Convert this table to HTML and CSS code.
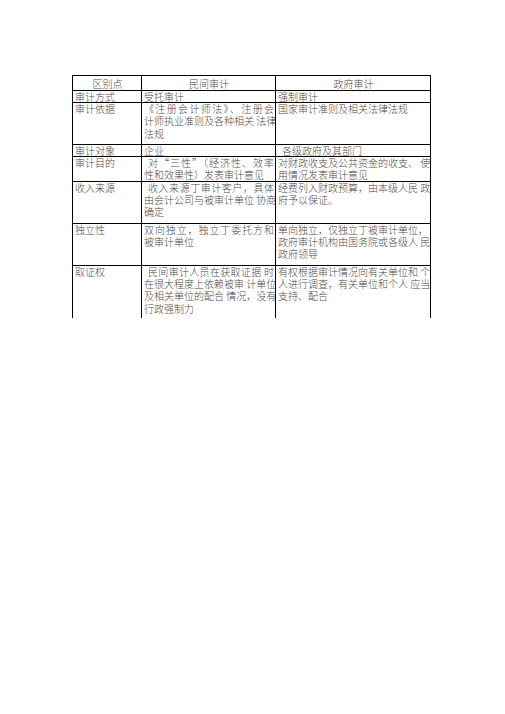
FILE: index.html
```html
<!DOCTYPE html>
<html lang="zh">
<head>
<meta charset="utf-8">
<title>民间审计与政府审计</title>
<link rel="stylesheet" href="styles.css">
</head>
<body>
<div class="page">
<table class="cmp">
<colgroup><col class="c1"><col class="c2"><col class="c3"></colgroup>
<tr class="r-head">
<th>区别点</th><th>民间审计</th><th>政府审计</th>
</tr>
<tr class="r-fs">
<td>审计方式</td><td>受托审计</td><td>强制审计</td>
</tr>
<tr class="r-yj">
<td>审计依据</td>
<td><span class="j">《注册会计师法》、注册会</span><span class="j">计师执业准则及各种相关 法律</span><span class="l">法规</span></td>
<td><span class="l">国家审计准则及相关法律法规</span></td>
</tr>
<tr class="r-dx">
<td>审计对象</td><td>企业</td><td><span class="l ind">各级政府及其部门</span></td>
</tr>
<tr class="r-md">
<td>审计目的</td>
<td><span class="j ind">对“三性”（经济性、效率</span><span class="l">性和效果性）发表审计意见</span></td>
<td><span class="j">对财政收支及公共资金的收支、 使</span><span class="l">用情况发表审计意见</span></td>
</tr>
<tr class="r-ly">
<td>收入来源</td>
<td><span class="j ind">收入来源丁审计客户，具体</span><span class="j">由会计公司与被审计单位 协商</span><span class="l">确定</span></td>
<td><span class="j">经费列入财政预算，由本级人民 政</span><span class="l">府予以保证。</span></td>
</tr>
<tr class="r-dl">
<td>独立性</td>
<td><span class="j">双向独立，独立丁委托方和</span><span class="l">被审计单位</span></td>
<td><span class="l">单向独立，仅独立丁被审计单位，</span><span class="j">政府审计机构由国务院或各级人 民</span><span class="l">政府领导</span></td>
</tr>
<tr class="r-qz">
<td>取证权</td>
<td><span class="j ind">民间审计人员在获取证据 时</span><span class="j">在很大程度上依赖被审 计单位</span><span class="j">及相关单位的配合 情况，没有</span><span class="l">行政强制力</span></td>
<td><span class="j">有权根据审计情况向有关单位和 个</span><span class="j">人进行调查，有关单位和个人 应当</span><span class="l">支持、配合</span></td>
</tr>
</table>
</div>
</body>
</html>
```

FILE: styles.css
```css
html, body {
  margin: 0;
  padding: 0;
  background: #ffffff;
}

.page {
  padding: 75px 0 0 72px;
}

.cmp {
  border-collapse: collapse;
  table-layout: fixed;
  width: 358px;
  font-family: "Noto Sans CJK SC", "Noto Sans CJK JP", sans-serif;
  font-size: 10px;
  font-weight: 300;
  line-height: 12.4px;
  color: #4a4a4a;
}

.c1 { width: 69px; }
.c2 { width: 134px; }
.c3 { width: 155px; }

.cmp th,
.cmp td {
  border: 1px solid #000;
  padding: 0 1px 0 2px;
  vertical-align: top;
  text-align: left;
  font-weight: 300;
  overflow: hidden;
  white-space: nowrap;
}

.cmp th {
  text-align: center;
  line-height: 13px;
  padding-top: 1px;
}

.cmp tr:last-child td {
  border-bottom: none;
}

.j {
  display: block;
  text-align: justify;
  text-align-last: justify;
}

.l {
  display: block;
}

.ind {
  padding-left: 4px;
}

.r-head { height: 15px; }
.r-fs { height: 11px; }
.r-fs td { line-height: 11px; }
.r-yj { height: 42px; }
.r-dx { height: 11px; }
.r-dx td { line-height: 11px; }
.r-md { height: 24px; }
.r-md td { line-height: 11.8px; }
.r-ly { height: 42px; }
.r-dl { height: 42px; }
.r-qz { height: 53px; }
```
